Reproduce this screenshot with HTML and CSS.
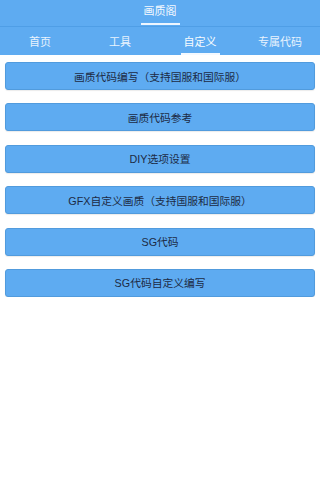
FILE: index.html
```html
<!DOCTYPE html>
<html lang="zh">
<head>
<meta charset="utf-8">
<link rel="stylesheet" href="styles.css">
</head>
<body>
<header class="appbar">
  <div class="titlebar">
    <div class="title">画质阁<span class="title-line"></span></div>
  </div>
  <nav class="tabs">
    <div class="tab">首页</div>
    <div class="tab">工具</div>
    <div class="tab active">自定义<span class="tab-line"></span></div>
    <div class="tab">专属代码</div>
  </nav>
</header>
<main class="list">
  <div class="btn">画质代码编写（支持国服和国际服）</div>
  <div class="btn">画质代码参考</div>
  <div class="btn">DIY选项设置</div>
  <div class="btn">GFX自定义画质（支持国服和国际服）</div>
  <div class="btn">SG代码</div>
  <div class="btn">SG代码自定义编写</div>
</main>
</body>
</html>
```
FILE: styles.css
```css
html, body {
  margin: 0;
  padding: 0;
  background: #ffffff;
  font-family: "Liberation Sans", "Noto Sans CJK SC", sans-serif;
}
.appbar {
  background: #5eabf1;
}
.titlebar {
  height: 26px;
  display: flex;
  justify-content: center;
  border-bottom: 1px solid #4f9ee6;
}
.title {
  position: relative;
  width: 39px;
  text-align: center;
  color: #f4f9ff;
  font-size: 11px;
  line-height: 22px;
}
.title-line {
  position: absolute;
  left: 0;
  right: 0;
  bottom: 1px;
  height: 2px;
  background: #eef6ff;
}
.tabs {
  display: grid;
  grid-template-columns: repeat(4, 1fr);
  height: 28px;
}
.tab {
  position: relative;
  display: flex;
  justify-content: center;
  align-items: center;
  color: #e9f3fd;
  font-size: 11px;
}
.tab.active {
  color: #f6fbff;
}
.tab-line {
  position: absolute;
  bottom: 0;
  left: 50%;
  width: 39px;
  margin-left: -19px;
  height: 2px;
  background: #f4f9ff;
}
.list {
  display: flex;
  flex-direction: column;
  gap: 13.4px;
  padding: 7px 5px 0 5px;
}
.btn {
  height: 28px;
  box-sizing: border-box;
  background: #5eabf1;
  border: 1px solid #519bdd;
  border-radius: 3px;
  box-shadow: 0 1px 1px rgba(0, 0, 0, 0.08);
  display: flex;
  justify-content: center;
  align-items: center;
  color: #1c2a44;
  font-size: 10.75px;
}
```
